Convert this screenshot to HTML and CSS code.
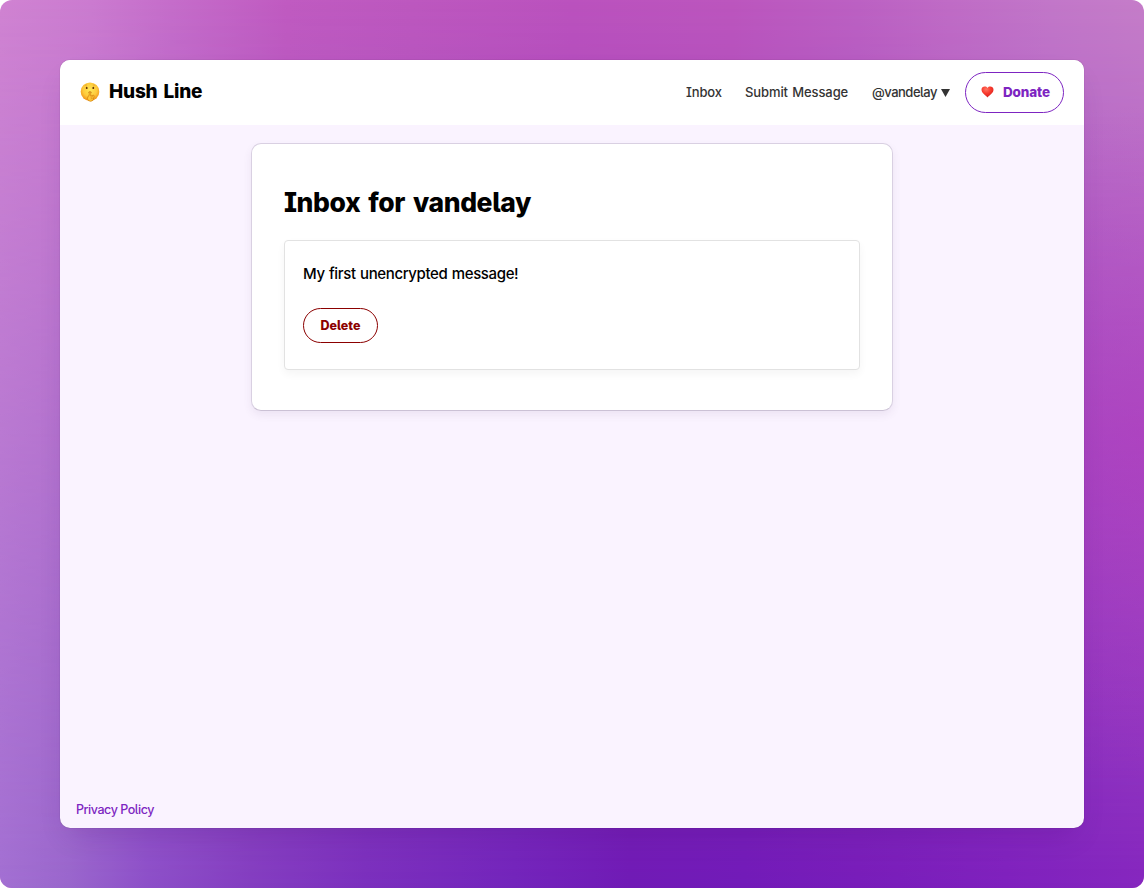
FILE: index.html
```html
<!DOCTYPE html>
<html lang="en">
<head>
<meta charset="utf-8">
<title>Hush Line</title>
<link rel="stylesheet" href="styles.css">
</head>
<body>
<div class="backdrop">
  <div class="window">
    <header class="header">
      <a class="brand">
        <svg class="face" viewBox="0 0 20 20">
          <defs>
            <radialGradient id="skin" cx=".5" cy=".4" r=".62"><stop offset="0" stop-color="#ffe957"/><stop offset=".6" stop-color="#fec93b"/><stop offset="1" stop-color="#ee8b13"/></radialGradient>
          </defs>
          <circle cx="10" cy="9.7" r="9.3" fill="url(#skin)"/>
          <path d="M4.7 3.6q1.2-1 2.5-.6M12.8 3q1.5-.3 2.5.6" fill="none" stroke="#d18a18" stroke-width=".5"/>
          <ellipse cx="6.7" cy="5.9" rx=".9" ry="1.2" fill="#67350a"/>
          <ellipse cx="13.3" cy="5.9" rx=".9" ry="1.2" fill="#67350a"/>
          <path d="M8.2 10.5q1.8-1.6 3.6 0" fill="none" stroke="#c07a1d" stroke-width=".7"/>
          <path d="M9.2 10.1q.8-1 1.5 0v4l2.5-.9q1.3.1.9 1.3l-1.2 3.9q-2.5 1.8-4.6.1-1.6-2-.3-4.2l1.2-.8z" fill="#ffc83a" stroke="#ce7708" stroke-width=".65"/>
          <path d="M10.7 15.4l2.4-.8M10.6 17l2.1-.7" stroke="#ce7708" stroke-width=".6"/>
        </svg>
        <span class="brand-name">Hush Line</span>
      </a>
      <nav class="nav">
        <a class="link-inbox">Inbox</a>
        <a class="link-submit">Submit Message</a>
        <a class="account"><span class="handle">@vandelay</span><svg class="caret" viewBox="0 0 9 8"><path d="M0 0h9L4.5 8z" fill="#333"/></svg></a>
        <a class="donate">
          <svg class="heart" viewBox="0 0 13 12">
            <defs><radialGradient id="red" cx=".4" cy=".25" r=".8"><stop offset="0" stop-color="#ff7563"/><stop offset=".5" stop-color="#f7382c"/><stop offset="1" stop-color="#cf2120"/></radialGradient></defs>
            <path d="M6.5 11.4C5.4 9.7.5 7.4.5 3.7.5.2 5-.3 6.5 2 8-.3 12.5.2 12.5 3.7c0 3.7-4.9 6-6 7.7z" fill="url(#red)"/>
          </svg>
          <span class="donate-label">Donate</span>
        </a>
      </nav>
    </header>
    <main class="main">
      <section class="card">
        <h1 class="title"><span>Inbox for vandelay</span></h1>
        <article class="message">
          <p class="message-text"><span>My first unencrypted message!</span></p>
          <button class="delete">Delete</button>
        </article>
      </section>
    </main>
    <footer class="footer"><a>Privacy Policy</a></footer>
  </div>
</div>
</body>
</html>
```
FILE: styles.css
```css
* { box-sizing: border-box; }
body {
  margin: 0;
  background: #fff;
  font-family: Inter, "Liberation Sans", sans-serif;
  font-feature-settings: "cv05", "cv08";
}
.backdrop {
  position: relative;
  height: 888px;
  padding: 60px;
  overflow: hidden;
  border-radius: 12px;
  background: linear-gradient(90deg, #d083d2 0, #cb7bd0 8%, #c56dca 15%, #c05bc1 25%, #bd58bf 36%, #bb52be 50%, #bc56be 64%, #bc61c3 75%, #c06cc6 83%, #c277c9 92%, #c57dc9 100%);
}
/* Lower colours of the backdrop, faded in from top to bottom */
.backdrop::before {
  content: "";
  position: absolute;
  inset: 0;
  background: linear-gradient(90deg, #a26fd2 0, #9966cc 6%, #8c4fc8 13%, #833dc0 22%, #7a2fbd 32%, #7224bb 45%, #6f1ab5 55%, #711ab8 65%, #771cb9 75%, #7e20bd 88%, #8526be 100%);
  -webkit-mask-image: linear-gradient(#0000 0, #000 100%);
  mask-image: linear-gradient(#0000 0, #000 100%);
}
/* Magenta glow along the right edge */
.backdrop::after {
  content: "";
  position: absolute;
  inset: 0;
  background: radial-gradient(ellipse 300px 340px at 100% 50%, #b535bd80 0, #b535bd00 100%);
}
.window {
  position: relative;
  z-index: 1;
  height: 768px;
  display: flex;
  flex-direction: column;
  overflow: hidden;
  border-radius: 10px;
  background: #faf3ff;
  box-shadow: 0 0 1px #0006, 0 14px 28px -10px #3b086630;
}
.header {
  height: 65px;
  flex: none;
  display: flex;
  align-items: center;
  justify-content: space-between;
  padding: 0 20px;
  background: #fff;
}
.brand { display: flex; align-items: center; gap: 9px; padding-bottom: 1px; }
.face { width: 20px; height: 20px; }
.brand-name { font-size: 19px; font-weight: 800; line-height: 24px; letter-spacing: -.2px; word-spacing: 2px; }
.nav { display: flex; align-items: center; font-size: 13.5px; line-height: 20px; color: #333; }
.link-inbox, .link-submit, .handle { padding-bottom: 1px; font-weight: 450; }
.link-inbox { width: 36px; font-size: 13px; letter-spacing: -.15px; white-space: nowrap; }
.link-submit { width: 103px; margin-left: 23px; font-size: 13px; letter-spacing: -.1px; word-spacing: 1px; white-space: nowrap; }
.account { display: flex; align-items: center; gap: 4px; margin-left: 24px; }
.handle { width: 65px; font-size: 13px; letter-spacing: -.5px; }
.caret { width: 9px; height: 8px; }
.donate {
  width: 99px;
  height: 41px;
  margin-left: 15px;
  display: flex;
  align-items: center;
  padding: 0 0 1px 15px;
  gap: 9px;
  border: 1px solid #7d25c1;
  border-radius: 21px;
  color: #7d25c1;
  font-weight: 800;
  letter-spacing: -.15px;
}
.heart { width: 13px; height: 12px; }
.main { flex: 1; padding-top: 18px; }
.card {
  width: 642px;
  height: 268px;
  margin: 0 auto;
  padding: 32px;
  border: 1px solid #d9d0e2;
  border-bottom-color: #cbc1d5;
  border-radius: 10px;
  background: #fff;
  box-shadow: 0 4px 8px #50306b14;
}
.title { margin: 9px 0 21px; font-size: 26.5px; line-height: 34px; font-weight: 800; letter-spacing: -.4px; word-spacing: 2.5px; }
.message {
  height: 130px;
  padding: 21px 18px;
  border: 1px solid #e2e2e2;
  border-radius: 4px;
  background: #fff;
  box-shadow: 0 4px 8px #0000000b;
}
.message-text { margin: 0 0 22px; font-size: 15px; font-weight: 450; line-height: 24px; letter-spacing: -.37px; word-spacing: .7px; }
.delete {
  display: block;
  width: 75px;
  height: 35px;
  padding: 0;
  border: 1px solid #8b0000;
  border-radius: 18px;
  background: #fff;
  color: #8b0000;
  font: 800 12.5px/20px Inter, "Liberation Sans", sans-serif;
  font-feature-settings: inherit;
}
.footer { padding: 0 16px 8px; color: #7d25c1; font-size: 12.5px; font-weight: 450; line-height: 20px; letter-spacing: -.45px; }
```
